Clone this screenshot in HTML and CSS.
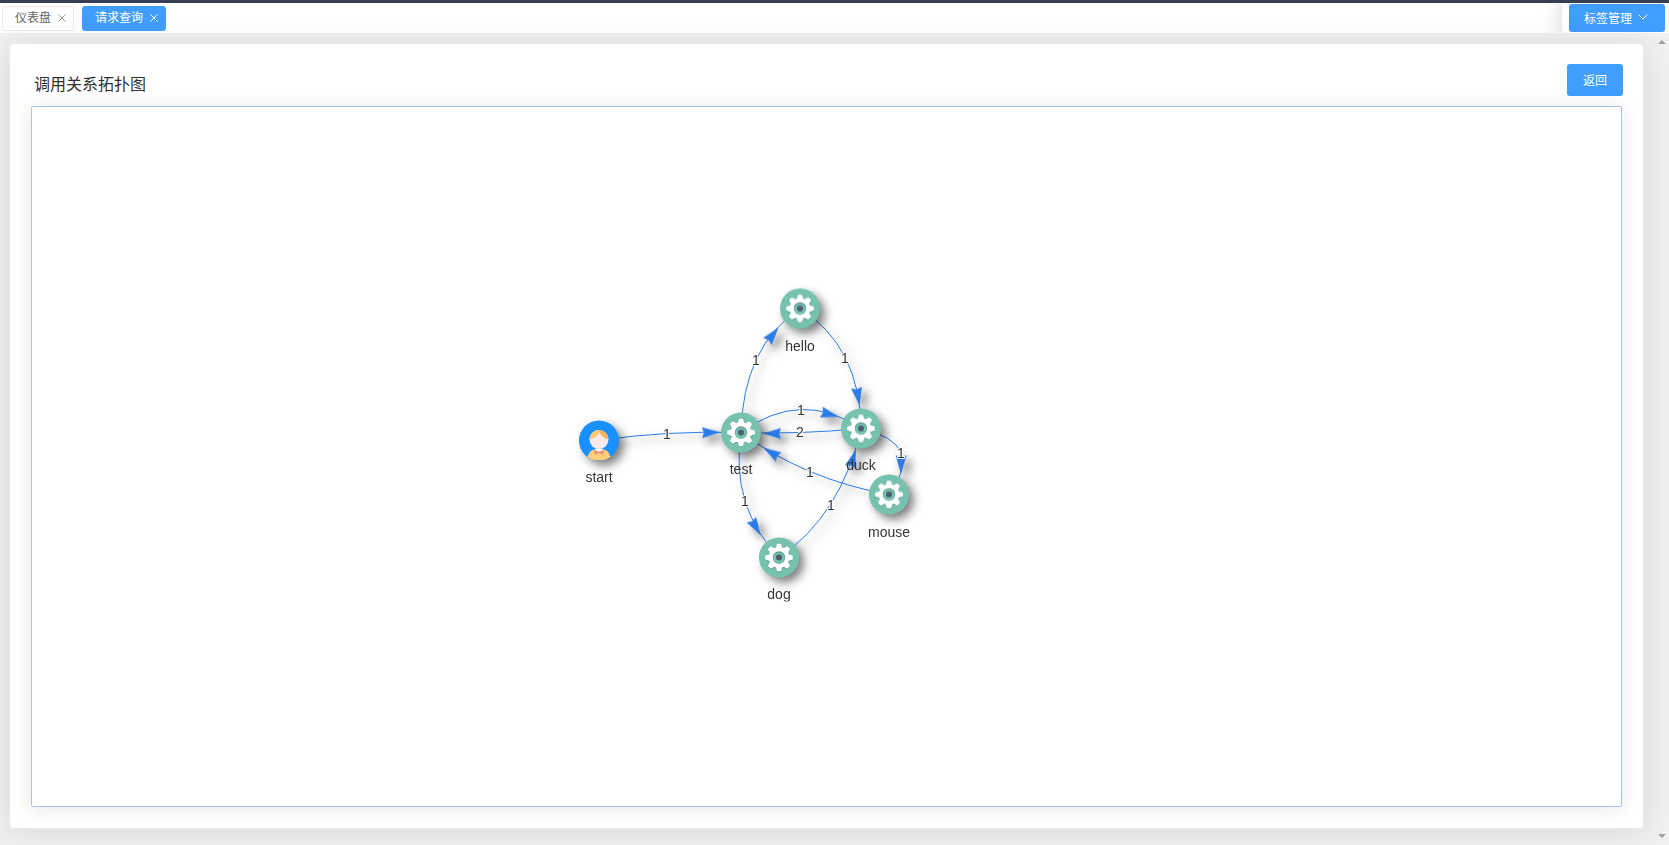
FILE: index.html
```html
<!DOCTYPE html>
<html lang="zh-CN">
<head>
<meta charset="utf-8">
<title>调用关系拓扑图</title>
<link rel="stylesheet" href="styles.css">
</head>
<body>
<div class="app">
  <div class="topline"></div>
  <header class="tags">
    <nav class="tag-list">
      <div class="tag">
        <a class="tag-link" href="#">仪表盘</a>
        <button class="tag-close" type="button" aria-label="关闭仪表盘"><svg width="8" height="8" viewBox="0 0 8 8"><path d="M0.5 0.5L7.5 7.5M7.5 0.5L0.5 7.5"/></svg></button>
      </div>
      <div class="tag tag-active">
        <a class="tag-link" href="#">请求查询</a>
        <button class="tag-close" type="button" aria-label="关闭请求查询"><svg width="8" height="8" viewBox="0 0 8 8"><path d="M0.5 0.5L7.5 7.5M7.5 0.5L0.5 7.5"/></svg></button>
      </div>
    </nav>
    <div class="tag-tools">
      <button class="btn btn-manage" type="button">标签管理<svg width="10" height="6" viewBox="0 0 10 6"><path d="M0.7 0.7L5 5L9.3 0.7"/></svg></button>
    </div>
  </header>
  <div class="page">
    <main class="content">
      <section class="card">
        <div class="card-head">
          <h1 class="title">调用关系拓扑图</h1>
          <button class="btn btn-back" type="button">返回</button>
        </div>
        <div class="canvas">
          <svg class="graph" viewBox="32 108 1589 698" role="img" aria-label="调用关系拓扑图">
            <defs>
              <path id="arrow" d="M9 0L-9 5.5L-7.2 0L-9 -5.5Z"/>
              <path id="tooth" d="M-4.6 -8Q-2.5 -10.2 -2.3 -12.8Q-2.1 -13.8 -1.2 -13.8H1.2Q2.1 -13.8 2.3 -12.8Q2.5 -10.2 4.6 -8Z"/>
              <g id="cog">
                <circle r="10"/>
                <use href="#tooth"/>
                <use href="#tooth" transform="rotate(45)"/>
                <use href="#tooth" transform="rotate(90)"/>
                <use href="#tooth" transform="rotate(135)"/>
                <use href="#tooth" transform="rotate(180)"/>
                <use href="#tooth" transform="rotate(225)"/>
                <use href="#tooth" transform="rotate(270)"/>
                <use href="#tooth" transform="rotate(315)"/>
              </g>
              <g id="service">
                <circle class="disc" r="20"/>
                <use class="cog-shade" href="#cog" y="1"/>
                <use class="cog" href="#cog"/>
                <circle class="hole-shade" r="6.2"/>
                <circle class="disc-plain" cy="0.6" r="5.6"/>
                <circle class="core" r="3"/>
              </g>
              <clipPath id="round"><circle r="20"/></clipPath>
            </defs>

            <g class="edges">
              <path d="M599 441Q664 431 741 433"/>
              <path d="M741 433Q743 347 800 309"/>
              <path d="M800 309Q860 347 861 429"/>
              <path d="M741 433Q801 389 861 429"/>
              <path d="M861 429Q799 435 741 433"/>
              <path d="M889 495Q805 480 741 433"/>
              <path d="M741 433Q730 507 779 558"/>
              <path d="M779 558Q841 516 861 429"/>
              <path d="M861 429Q927 444 889 495"/>
            </g>
            <g class="arrows">
              <use href="#arrow" transform="translate(711 433) rotate(-1)"/>
              <use href="#arrow" transform="translate(773 335) rotate(-51)"/>
              <use href="#arrow" transform="translate(858 397) rotate(80)"/>
              <use href="#arrow" transform="translate(830 415) rotate(15)"/>
              <use href="#arrow" transform="translate(772 434) rotate(180)"/>
              <use href="#arrow" transform="translate(771 453) rotate(211)"/>
              <use href="#arrow" transform="translate(756 528) rotate(59)"/>
              <use href="#arrow" transform="translate(853 459) rotate(-72)"/>
              <use href="#arrow" transform="translate(901 465) rotate(91)"/>
            </g>
            <g class="label">
              <text x="667" y="439">1</text>
              <text x="756" y="365">1</text>
              <text x="845" y="363">1</text>
              <text x="801" y="415">1</text>
              <text x="800" y="437">2</text>
              <text x="810" y="477">1</text>
              <text x="745" y="506">1</text>
              <text x="831" y="510">1</text>
              <text x="901" y="458">1</text>
            </g>

            <g class="nodes">
              <g transform="translate(599 441)">
                <circle class="user-disc" r="20"/>
                <g clip-path="url(#round)">
                  <path class="shirt" d="M-12 20Q-11 9 -4 9H4Q11 9 12 20Z"/>
                  <path class="collar" d="M-4 8H4L2 13H-2Z"/>
                  <path class="bow" d="M-4.5 9.5L0 11.3L4.5 9.5V14.5L0 12.6L-4.5 14.5Z"/>
                </g>
                <circle class="face" cy="-1" r="9.5"/>
                <path class="hair-light" d="M-9.5 -1A9.5 9.5 0 0 1 1 -10.4Q0 -3 -9.5 -1Z"/>
                <path class="hair-dark" d="M0 -10.5A9.5 9.5 0 0 1 9.5 -1Q2 -2.5 0 -10.5Z"/>
              </g>
              <use href="#service" x="741" y="433"/>
              <use href="#service" x="800" y="309"/>
              <use href="#service" x="861" y="429"/>
              <use href="#service" x="889" y="495"/>
              <use href="#service" x="779" y="558"/>
            </g>
            <g class="label">
              <text x="599" y="482">start</text>
              <text x="741" y="474">test</text>
              <text x="800" y="351">hello</text>
              <text x="861" y="470">duck</text>
              <text x="889" y="537">mouse</text>
              <text x="779" y="599">dog</text>
            </g>
          </svg>
        </div>
      </section>
    </main>
    <div class="scrollbar" aria-hidden="true">
      <svg width="8" height="4" viewBox="0 0 8 4"><path d="M0 4L4 0L8 4Z"/></svg>
      <svg width="8" height="4" viewBox="0 0 8 4"><path d="M0 0L4 4L8 0Z"/></svg>
    </div>
  </div>
</div>
</body>
</html>
```
FILE: styles.css
```css
* {
  box-sizing: border-box;
}

body {
  margin: 0;
  font-family: "Liberation Sans", "Noto Sans CJK SC", sans-serif;
  font-size: 12px;
  color: #303133;
}

button {
  font-family: inherit;
  font-size: 12px;
  border: 0;
  padding: 0;
  cursor: pointer;
}

.app {
  display: flex;
  flex-direction: column;
  height: 100vh;
  overflow: hidden;
  background: #f0f0f0;
}

.topline {
  flex: none;
  height: 3px;
  background: #363f54;
}

.tags {
  flex: none;
  display: flex;
  justify-content: space-between;
  height: 30px;
  background: #fff;
  overflow: hidden;
}

.tag-list {
  display: flex;
  align-items: center;
  gap: 8px;
  padding: 0 2px;
}

.tag {
  display: flex;
  align-items: center;
  gap: 7px;
  height: 25px;
  padding: 0 7px 0 12px;
  border: 1px solid #e9eaec;
  border-radius: 3px;
  background: #fff;
  color: #666;
}

.tag-active {
  border-color: #409eff;
  background: #409eff;
  color: #fff;
}

.tag-link {
  color: inherit;
  text-decoration: none;
  line-height: 20px;
}

.tag-close {
  display: flex;
  background: none;
  color: #999;
}

.tag-active .tag-close {
  color: #fff;
}

.tag-close svg,
.btn svg {
  fill: none;
  stroke: currentColor;
  stroke-width: 1;
}

.tag-tools {
  padding: 1px 4px 1px 7px;
  background: #fff;
  box-shadow: -3px 0 15px 3px rgba(0, 0, 0, 0.1);
}

.btn {
  border-radius: 3px;
  background: #409eff;
  color: #fff;
}

.btn-manage {
  display: flex;
  align-items: center;
  gap: 6px;
  height: 28px;
  padding: 0 17px 2px 15px;
}

.btn-back {
  width: 56px;
  height: 32px;
  padding-bottom: 2px;
}

.page {
  flex: 1;
  min-height: 0;
  display: flex;
}

.content {
  flex: 1;
  display: flex;
  padding: 10px 9px 16px;
  min-width: 0;
}

.card {
  flex: 1;
  display: flex;
  flex-direction: column;
  padding: 20px 20px 21px 21px;
  border: 1px solid #e6e9f0;
  border-radius: 4px;
  background: #fff;
  box-shadow: 0 2px 30px rgba(0, 0, 0, 0.1);
}

.card-head {
  display: flex;
  justify-content: space-between;
  padding-bottom: 10px;
}

.title {
  margin: 0;
  padding: 10px 0 0 3px;
  font-size: 16px;
  font-weight: 400;
  line-height: 22px;
}

.canvas {
  flex: 1;
  min-height: 0;
  display: flex;
  margin: 0 1px 0 0;
  border: 1px solid #a5c4fa;
  border-radius: 2px;
  background: #fff;
  box-shadow: 0 2px 20px rgba(0, 0, 0, 0.1);
}

.graph {
  width: 100%;
  height: 100%;
}

.edges path {
  fill: none;
  stroke: #2b7ce9;
  stroke-width: 1;
}

.arrows {
  fill: #2b7ce9;
}

.edges,
.arrows,
.disc,
.user-disc {
  filter: drop-shadow(5px 5px 5px rgba(0, 0, 0, 0.5));
}

.label {
  font-family: "Liberation Sans", sans-serif;
  font-size: 14px;
  text-anchor: middle;
  fill: #343434;
}

.edges + .arrows + .label {
  stroke: #fff;
  stroke-width: 2;
  stroke-linejoin: round;
  paint-order: stroke;
}

.disc,
.disc-plain {
  fill: #76c2af;
}

.cog {
  fill: #fff;
}

.cog-shade {
  fill: #5fa593;
}

.hole-shade {
  fill: #5f9b8c;
}

.core {
  fill: #4f5d73;
}

.user-disc {
  fill: #1890ff;
}

.shirt {
  fill: #ffd07a;
}

.collar {
  fill: #fff;
}

.bow {
  fill: #fa8b78;
}

.face {
  fill: #fbe8e8;
}

.hair-light {
  fill: #ffc86e;
}

.hair-dark {
  fill: #f5b35c;
}

.scrollbar {
  flex: none;
  width: 16px;
  display: flex;
  flex-direction: column;
  justify-content: space-between;
  align-items: center;
  padding: 7px 0;
  margin-right: -1px;
  margin-left: 1px;
  fill: #a3a3a3;
}
```
